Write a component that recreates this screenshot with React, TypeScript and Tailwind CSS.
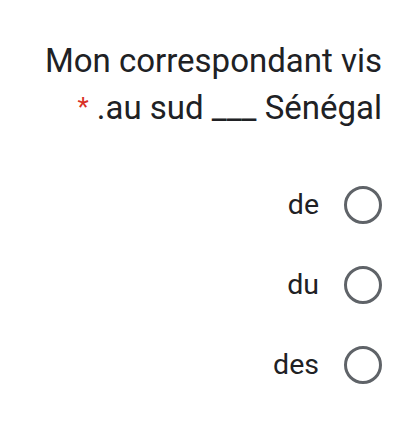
import React from "react";

const options = ["de", "du", "des"];

const App = () => {
  return (
    <div
      dir="rtl"
      className="w-[420px] h-[435px] bg-white text-[#202124] font-['Roboto',sans-serif] pr-[38px] pt-[37px]"
    >
      <h2 className="text-[33px] leading-[47px] font-normal">
        Mon correspondant vis
        <br />
        au sud ___ Sénégal.
        <span className="text-[#d93025] text-[26px] mr-[8px] align-top">*</span>
      </h2>

      <div className="mt-[55px] flex flex-col gap-[42px]">
        {options.map((opt) => (
          <label key={opt} className="flex items-center gap-[25px] h-[38px]">
            <span className="w-[38px] h-[38px] rounded-full border-[3px] border-[#5f6368] box-border" />
            <span className="text-[28.5px] leading-none text-[#202124]">{opt}</span>
          </label>
        ))}
      </div>
    </div>
  );
};

export default App;
